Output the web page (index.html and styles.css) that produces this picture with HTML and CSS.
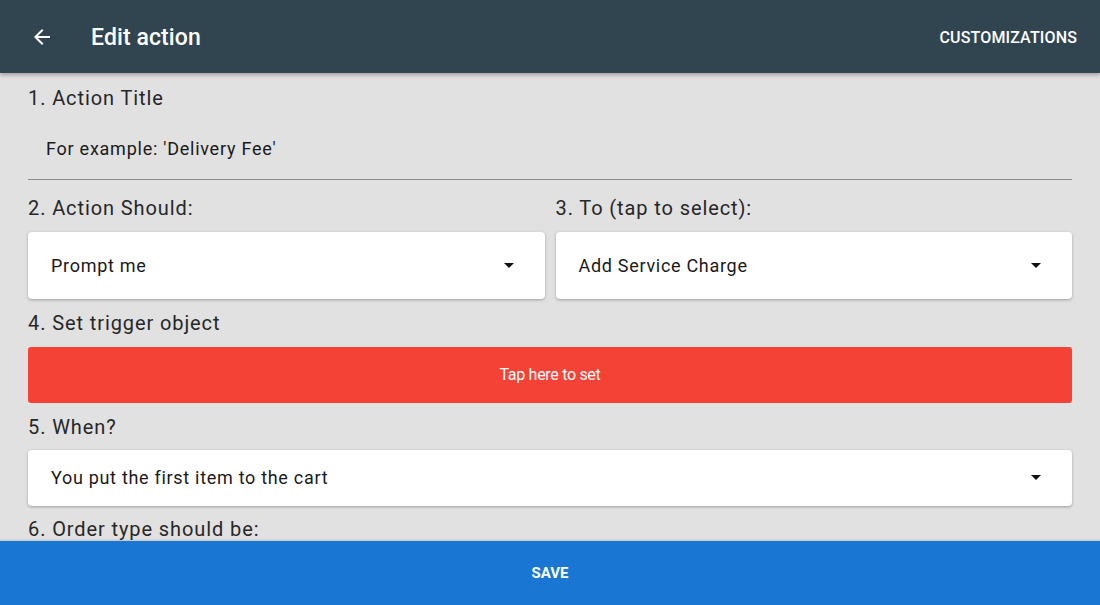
FILE: index.html
```html
<!DOCTYPE html>
<html>
<head>
<meta charset="utf-8">
<link rel="stylesheet" href="styles.css">
</head>
<body>
<div class="app">
  <header class="topbar">
    <div class="topbar-left">
      <svg class="back" width="24" height="24" viewBox="0 0 24 24"><path d="M20 11H7.83l5.59-5.59L12 4l-8 8 8 8 1.41-1.41L7.83 13H20v-2z" fill="#fff"/></svg>
      <h1 class="title">Edit action</h1>
    </div>
    <div class="action">CUSTOMIZATIONS</div>
  </header>
  <main class="content">
    <div class="label">1. Action Title</div>
    <div class="textfield">For example: 'Delivery Fee'</div>
    <div class="row">
      <div class="col">
        <div class="label">2. Action Should:</div>
        <div class="select"><span>Prompt me</span><span class="caret"></span></div>
      </div>
      <div class="col">
        <div class="label">3. To (tap to select):</div>
        <div class="select"><span>Add Service Charge</span><span class="caret"></span></div>
      </div>
    </div>
    <div class="label">4. Set trigger object</div>
    <div class="redbtn">Tap here to set</div>
    <div class="label">5. When?</div>
    <div class="select"><span>You put the first item to the cart</span><span class="caret"></span></div>
    <div class="label">6. Order type should be:</div>
  </main>
  <footer class="savebar">SAVE</footer>
</div>
</body>
</html>
```
FILE: styles.css
```css
* { box-sizing: border-box; }
html, body { margin: 0; padding: 0; }
body {
  font-family: Roboto, "Noto Sans", sans-serif;
  background: #e1e1e1;
  width: 1100px;
  height: 605px;
  overflow: hidden;
}
.app {
  display: flex;
  flex-direction: column;
  height: 605px;
}
.topbar {
  height: 73px;
  flex: none;
  background: #304550;
  display: flex;
  align-items: center;
  justify-content: space-between;
  padding: 0 23px 0 30px;
  box-shadow: 0 2px 4px rgba(0,0,0,0.3);
  position: relative;
  z-index: 2;
}
.topbar-left { display: flex; align-items: center; }
.back { margin-top: 1px; }
.title {
  margin: 2px 0 0 37px;
  color: #fff;
  font-size: 23px;
  font-weight: 500;
  letter-spacing: 0.1px;
}
.action {
  color: #fff;
  font-size: 16px;
  font-weight: 500;
  letter-spacing: 0.15px;
  margin-top: 1px;
}
.content {
  flex: 1;
  overflow: hidden;
  padding: 0 28px 0 28px;
  display: flex;
  flex-direction: column;
}
.label {
  font-size: 20px;
  color: #272727;
  letter-spacing: 0.9px;
  line-height: 24px;
}
.content > .label:first-child { margin-top: 13px; }
.textfield {
  margin-top: 28px;
  padding: 0 0 20px 18px;
  font-size: 18px;
  color: #1a1a1a;
  letter-spacing: 0.75px;
  line-height: 21px;
  border-bottom: 1px solid #8c8c8c;
}
.row {
  display: flex;
  gap: 11px;
  margin-top: 16px;
}
.col { flex: 1; display: flex; flex-direction: column; }
.row .label { margin-bottom: 12px; }
.select {
  background: #fff;
  border-radius: 4px;
  box-shadow: 0 1px 3px rgba(0,0,0,0.3);
  height: 67px;
  display: flex;
  align-items: center;
  justify-content: space-between;
  padding: 0 31px 0 23px;
  font-size: 18px;
  color: #1a1a1a;
  letter-spacing: 0.7px;
}
.caret {
  width: 0; height: 0;
  border-left: 5px solid transparent;
  border-right: 5px solid transparent;
  border-top: 5px solid #111;
}
.row + .label { margin-top: 12px; }
.redbtn {
  margin-top: 12px;
  height: 57px;
  background: #f44336;
  border-radius: 3px;
  color: #fff;
  font-size: 16px;
  display: flex;
  align-items: center;
  justify-content: center;
  letter-spacing: -0.3px;
}
.redbtn + .label { margin-top: 12px; }
.redbtn + .label + .select { margin-top: 11px; height: 58px; }
.select + .label { margin-top: 11px; }
.savebar {
  height: 64px;
  flex: none;
  background: #1976d2;
  color: #fff;
  font-weight: 700;
  font-size: 15px;
  display: flex;
  align-items: center;
  justify-content: center;
  box-shadow: 0 -1px 2px rgba(0,0,0,0.15);
}
```
